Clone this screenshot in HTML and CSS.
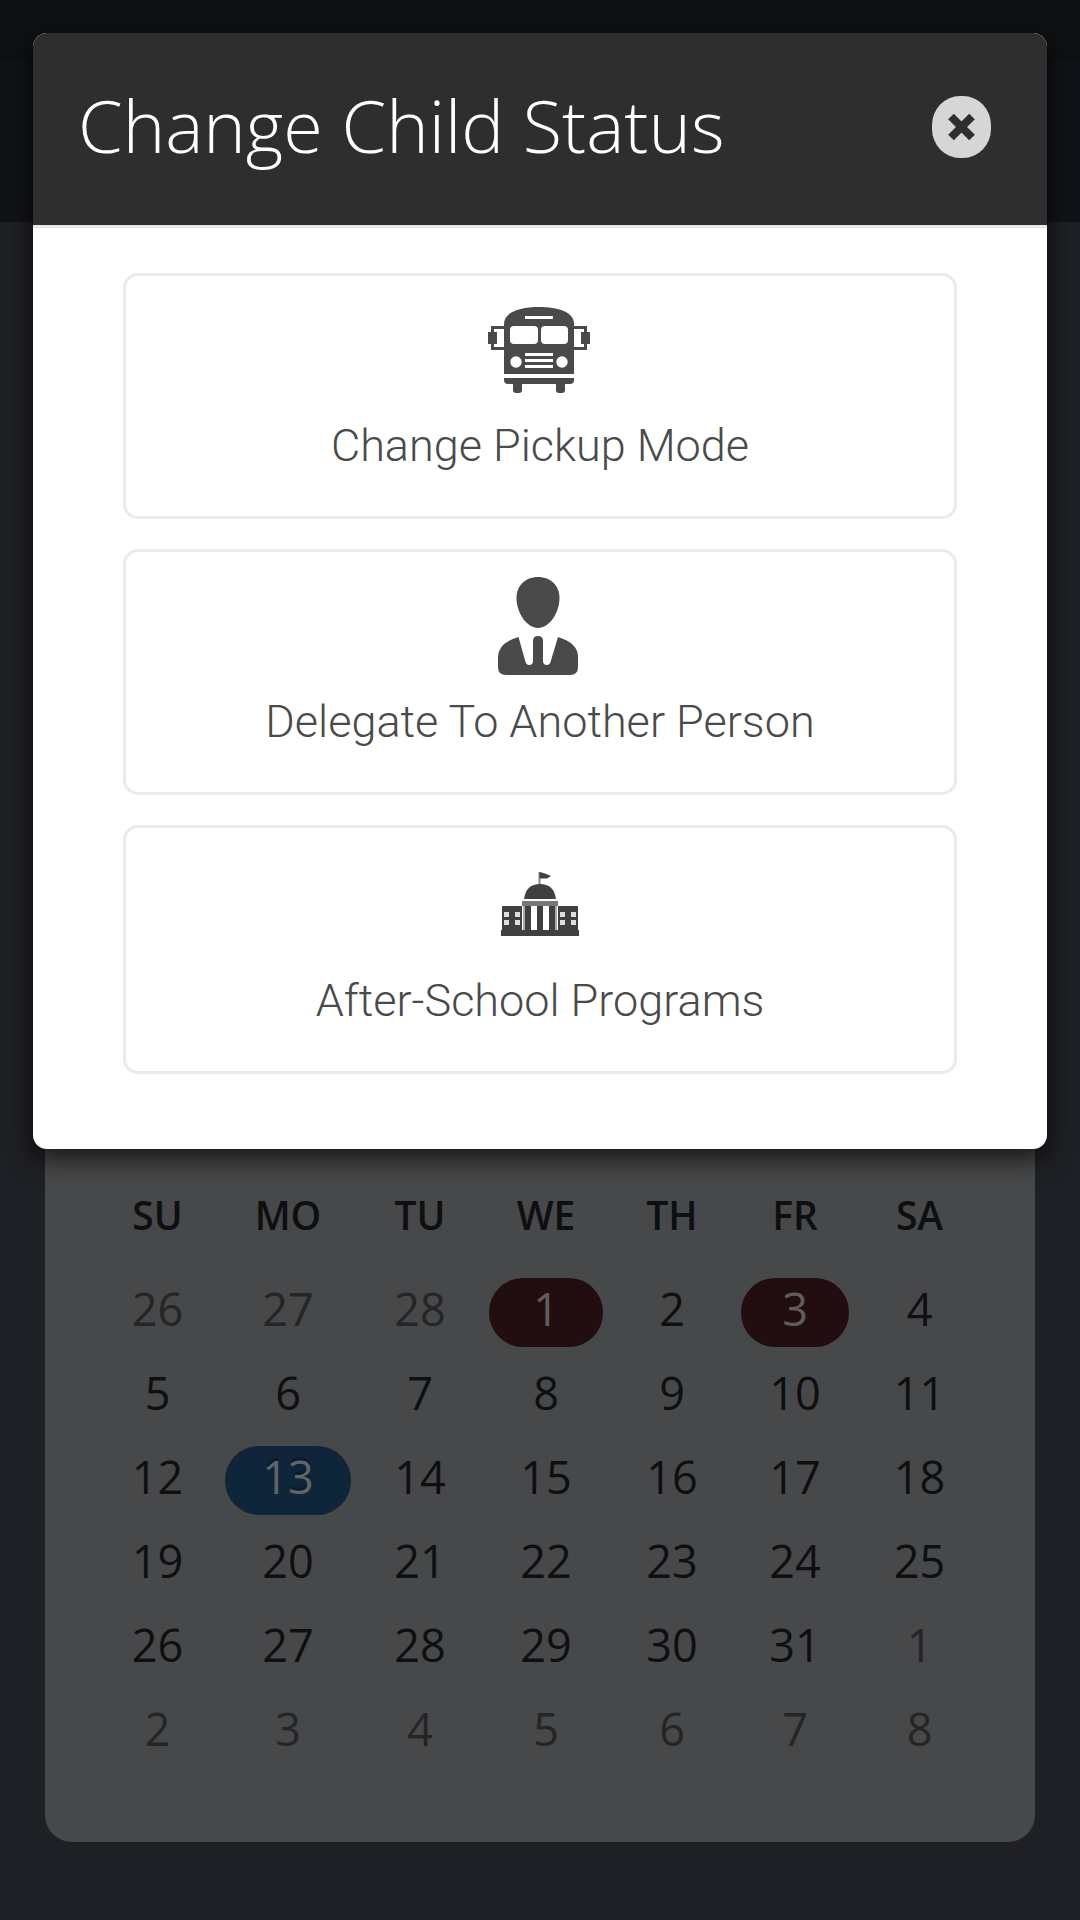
FILE: index.html
```html
<!DOCTYPE html>
<html lang="en">
<head>
  <meta charset="UTF-8" />
  <title>Change Child Status</title>
  <link rel="stylesheet" href="styles.css">
</head>
<body>
  <div class="statusbar"></div>
  <div class="navbar"></div>

  <div class="calendar">
    <table>
      <thead>
        <tr><th class="su">SU</th><th class="mo">MO</th><th class="tu">TU</th><th class="we">WE</th><th class="th">TH</th><th class="fr">FR</th><th class="sa">SA</th></tr>
      </thead>
      <tbody>
        <tr><td class="old">26</td><td class="old">27</td><td class="old">28</td><td><span class="day holiday">1</span></td><td>2</td><td><span class="day holiday">3</span></td><td>4</td></tr>
        <tr><td>5</td><td>6</td><td>7</td><td>8</td><td>9</td><td>10</td><td>11</td></tr>
        <tr><td>12</td><td><span class="day active">13</span></td><td>14</td><td>15</td><td>16</td><td>17</td><td>18</td></tr>
        <tr><td>19</td><td>20</td><td>21</td><td>22</td><td>23</td><td>24</td><td>25</td></tr>
        <tr><td>26</td><td>27</td><td>28</td><td>29</td><td>30</td><td>31</td><td class="new">1</td></tr>
        <tr><td class="new">2</td><td class="new">3</td><td class="new">4</td><td class="new">5</td><td class="new">6</td><td class="new">7</td><td class="new">8</td></tr>
      </tbody>
    </table>
  </div>

  <div class="modal">
    <div class="modal-header">
      <h1>Change Child Status</h1>
      <button class="close" type="button" aria-label="Close">
        <svg width="59" height="62" viewBox="0 0 59 62">
          <rect width="59" height="62" rx="28" ry="29" fill="#d6d6d6"/>
          <path d="M19 20.500L40 41.500M40 20.500L19 41.500" stroke="#2e2e2e" stroke-width="8"/>
        </svg>
      </button>
    </div>
    <div class="modal-body">
      <a class="option">
        <!-- school bus -->
        <svg class="icon bus" width="102" height="86" viewBox="0 0 102 86" fill="#4a4a4a">
          <path d="M16 67V17C16 5 32 0 51 0s35 5 35 17v50z"/>
          <path d="M16 71h70v2q0 4-4 4H20q-4 0-4-4z"/>
          <rect x="25" y="74" width="9" height="12" rx="3"/>
          <rect x="68" y="74" width="9" height="12" rx="3"/>
          <path d="M17 20.500H4.500v21H17M85 20.500h12.500v21H85" fill="none" stroke="#4a4a4a" stroke-width="3"/>
          <rect x="0" y="25" width="9" height="12"/>
          <rect x="93" y="25" width="9" height="12"/>
          <g fill="#fff">
            <rect x="37" y="9" width="28" height="3"/>
            <rect x="22" y="19" width="28" height="18" rx="4"/>
            <rect x="53" y="19" width="27" height="18" rx="4"/>
            <rect x="37" y="46" width="28" height="3"/>
            <rect x="37" y="52" width="28" height="3"/>
            <rect x="37" y="58" width="28" height="3"/>
            <circle cx="28" cy="55" r="5.700"/>
            <circle cx="74" cy="55" r="5.700"/>
          </g>
        </svg>
        <span>Change Pickup Mode</span>
      </a>
      <a class="option">
        <!-- person in a suit -->
        <svg class="icon person" width="80" height="98" viewBox="0 0 80 98" fill="#4a4a4a">
          <path d="M40 0C53 0 61.500 9 61.500 21C61.500 36 51 51 40 51S18.500 36 18.500 21C18.500 9 27 0 40 0z"/>
          <path d="M20.500 60L27.500 85Q28.500 88 31 88Q35 88 35 84V64Q35 59 40 59T45 64V84Q45 88 49 88Q51.500 88 52.500 85L60 60Q80 66 80 80V90Q80 98 72 98H8Q0 98 0 90V80Q0 66 20.500 60z"/>
        </svg>
        <span>Delegate To Another Person</span>
      </a>
      <a class="option school-option">
        <!-- domed school building -->
        <svg class="icon school" width="78" height="64" viewBox="0 0 78 64" fill="#404040">
          <path d="M37.500 0h2v12h-2z" fill="#888"/>
          <path d="M38.500 0L44 1.500 50 4 46 6.500H38.500z"/>
          <path d="M23 27Q25 12 39 12T55 27z"/>
          <path d="M21 29h36v5H21z" fill="#777"/>
          <path d="M24 34h6v24h-6zM36 34h6v24h-6zM48 34h6v24h-6z"/>
          <path d="M22 34h2v24h-2zM54 34h2v24h-2z" fill="#aaa"/>
          <path d="M1 34h20v24H1zM57 34h20v24H57z"/>
          <path d="M3 40h5v5H3zM14 40h5v5h-5zM3 48h5v5H3zM14 48h5v5h-5zM59 40h5v5h-5zM70 40h5v5h-5zM59 48h5v5h-5zM70 48h5v5h-5z" fill="#ddd"/>
          <path d="M0 58h78v6H0z"/>
        </svg>
        <span>After-School Programs</span>
      </a>
    </div>
  </div>
</body>
</html>
```

FILE: styles.css
```css
body {
  margin: 0;
  position: relative;
  height: 1920px;
  overflow: hidden;
  font-family: 'Open Sans', sans-serif;
  background: #1f2025;
}

.statusbar {
  height: 60px;
  background: #0e1012;
}

.navbar {
  height: 162px;
  background: #101217;
}

.calendar {
  box-sizing: border-box;
  width: 990px;
  height: 1620px;
  margin: 0 auto;
  padding: 954px 45px 0;
  background: #474849;
  border-radius: 0 0 27px 27px;
}

.calendar table {
  width: 900px;
  table-layout: fixed;
  border-collapse: collapse;
}

.calendar th {
  height: 101px;
  padding: 0 0 1px;
  font-size: 39px;
  font-weight: 600;
  line-height: 78px;
  vertical-align: top;
  color: #0e0f11;
}

.calendar td {
  height: 84px;
  padding: 0;
  font-size: 45px;
  line-height: 62px;
  text-align: center;
  vertical-align: top;
  color: #0e0f11;
}

.su { width: 135px; }
.mo { width: 126px; }
.tu { width: 138px; }
.we { width: 114px; }
.th { width: 138px; }
.fr { width: 108px; }
.sa { width: 141px; }

.calendar .old,
.calendar .new {
  color: #242526;
}

.day {
  display: block;
  height: 69px;
  border-radius: 34px;
  color: #625c5d;
}

.holiday {
  background: #220e10;
}

.active {
  background: #0f2539;
  color: #606568;
  text-shadow: 0 -3px 0 rgba(0, 0, 0, 0.25);
}

/* dialog sits over the calendar */
.modal {
  position: absolute;
  top: 33px;
  left: 33px;
  width: 1014px;
  height: 1116px;
  background: #fff;
  border-radius: 14px;
  box-shadow: 0 9px 27px rgba(0, 0, 0, 0.75);
  overflow: hidden;
}

.modal-header {
  display: flex;
  align-items: center;
  justify-content: space-between;
  box-sizing: border-box;
  height: 195px;
  padding: 0 56px 9px 45px;
  background: #2e2e2e;
  border-bottom: 3px solid #e9e5e9;
}

.modal-header h1 {
  margin: 0;
  font-size: 72px;
  font-weight: 300;
  line-height: 98px;
  color: #fff;
}

.close {
  padding: 5px 0 0;
  border: none;
  background: none;
}

.close svg {
  display: block;
}

.modal-body {
  display: flex;
  flex-direction: column;
  gap: 30px;
  padding: 45px 90px;
}

.option {
  display: flex;
  flex-direction: column;
  align-items: center;
  justify-content: space-between;
  box-sizing: border-box;
  height: 246px;
  padding: 25px 0 42px;
  border: 3px solid #eaeaea;
  border-radius: 15px;
  font-family: Roboto, sans-serif;
  font-size: 45px;
  font-weight: 300;
  line-height: 56px;
  color: #4a4a4a;
}

.school-option {
  height: 249px;
}

.bus {
  margin-top: 6px;
  margin-right: 2px;
}

.person {
  margin-right: 4px;
}

.school {
  margin-top: 19px;
}
```
